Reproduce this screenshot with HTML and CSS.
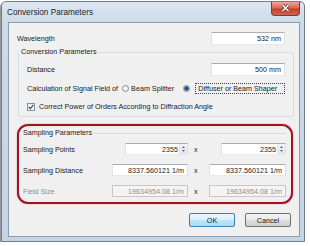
FILE: index.html
```html
<!DOCTYPE html>
<html lang="en">
<head>
  <meta charset="UTF-8">
  <title>Conversion Parameters</title>
  <link rel="stylesheet" href="styles.css">
</head>
<body>
  <div class="window">
    <div class="titlebar">
      <span class="title">Conversion Parameters</span>
      <span class="close">
        <svg width="29" height="14" viewBox="0 0 29 14">
          <path d="M11.5 4 L17.5 10 M17.5 4 L11.5 10" stroke="#6e2418" stroke-width="3" fill="none"/>
          <path d="M11.5 4 L17.5 10 M17.5 4 L11.5 10" stroke="#fff" stroke-width="1.6" fill="none"/>
        </svg>
      </span>
    </div>

    <div class="client">
      <div class="row wave-row">
        <label for="wavelength">Wavelength</label>
        <input class="box" id="wavelength" value="532 nm" readonly>
      </div>

      <fieldset class="group">
        <legend>Conversion Parameters</legend>
        <div class="row">
          <label for="distance">Distance</label>
          <input class="box" id="distance" value="500 mm" readonly>
        </div>
        <div class="row calc-row">
          <span>Calculation of Signal Field of</span>
          <span class="radio"></span>
          <span class="radio-text">Beam Splitter</span>
          <span class="radio checked"></span>
          <span class="focus">Diffuser or Beam Shaper</span>
        </div>
        <div class="row check-row">
          <span class="check">
            <svg width="6" height="6" viewBox="0 0 6 6">
              <path d="M0.8 3 L2.4 4.8 L5.3 0.9" stroke="#24569c" stroke-width="1.3" fill="none"/>
            </svg>
          </span>
          <span>Correct Power of Orders According to Diffraction Angle</span>
        </div>
      </fieldset>

      <div class="highlight">
        <fieldset class="sampling">
          <legend>Sampling Parameters</legend>
          <div class="grid">
            <label>Sampling Points</label>
            <div class="spin spin-a">
              <input value="2355" readonly>
              <span class="arrows">
                <svg width="7" height="10" viewBox="0 0 7 10">
                  <path d="M2 4 L3.5 2.3 L5 4Z M2 6 L3.5 7.7 L5 6Z" fill="#4a5a78"/>
                </svg>
              </span>
            </div>
            <span class="times">x</span>
            <div class="spin spin-b">
              <input value="2355" readonly>
              <span class="arrows">
                <svg width="7" height="10" viewBox="0 0 7 10">
                  <path d="M2 4 L3.5 2.3 L5 4Z M2 6 L3.5 7.7 L5 6Z" fill="#4a5a78"/>
                </svg>
              </span>
            </div>

            <label>Sampling Distance</label>
            <input class="box" value="8337.560121 1/m" readonly>
            <span class="times">x</span>
            <input class="box" value="8337.560121 1/m" readonly>

            <label class="disabled">Field Size</label>
            <input class="box" value="19634954.08 1/m" disabled>
            <span class="times">x</span>
            <input class="box" value="19634954.08 1/m" disabled>
          </div>
        </fieldset>
      </div>

      <div class="buttons">
        <button class="btn default">OK</button>
        <button class="btn">Cancel</button>
      </div>
    </div>
  </div>
</body>
</html>
```

FILE: styles.css
```css
* { box-sizing: border-box; }
body { margin: 0; background: #fff; font-family: "Liberation Sans", Arial, sans-serif; font-size: 7.2px; color: #1a1a1a; }

.window { margin: 1px 0 0 1px; width: 304px; height: 241px; padding: 0 4px 4px 6px; border: 1px solid #707d8d; border-radius: 5px 5px 0 0; background: linear-gradient(#dde6f0, #cbd9e8 22px, #c6d5e5); box-shadow: -1px 1px 1px rgba(0, 0, 0, 0.45); }

.titlebar { display: flex; justify-content: space-between; height: 20px; }
.title { margin-left: -1px; padding-top: 6px; font-size: 8.2px; line-height: 10px; color: #1e1e1e; }
.close { display: block; width: 29px; height: 14px; border: 1px solid #7d3a30; border-top: none; border-radius: 0 0 4px 4px; background: linear-gradient(#e9a99c, #d46a57 45%, #c2412c 55%, #d0634c); }
.close svg { display: block; margin-top: -1px; margin-left: -1px; }

.client { height: 215px; padding: 9px 4px 0 8px; border: 1px solid #8b9cb1; background: #f0f0f0; }

.row { display: flex; align-items: center; }
.wave-row { height: 13px; padding-right: 10px; }
.row .box { margin-left: auto; width: 74px; }

.box { height: 13px; padding: 0 3px; border: 1px solid; border-color: #abadb3 #dbdfe6 #e3e9ef #e2e3ea; background: #fff; font: inherit; color: #1a1a1a; text-align: right; outline: none; }
.box:disabled { background: #f4f4f4; color: #8d8d8d; border-color: #c8c8c8; }

.group { margin: 3px 1px 0 1px; padding: 7px 8px 5px 8px; border: 1px solid #d6dbe0; border-radius: 3px; min-width: 0; }
.group legend { margin-left: -7px; padding: 0 1px; line-height: 8px; }
.group .row:first-of-type { height: 13px; }

.calc-row { height: 11px; margin-top: 7px; }
.radio { width: 7px; height: 7px; margin-left: 4px; border: 1px solid #8c8c8c; border-radius: 50%; background: radial-gradient(circle at 40% 40%, #fff, #dcdcdc); }
.radio.checked { margin-left: 9px; background: radial-gradient(circle, #1f4f98 0 1.8px, #9db3cf 2.4px, #f2f2f2 3px); }
.radio-text { margin-left: 2px; }
.focus { margin-left: 5px; flex: 1; height: 11px; padding-left: 2px; border: 1px dotted #444; line-height: 9px; white-space: nowrap; }

.check-row { height: 9px; margin-top: 8px; }
.check { display: flex; align-items: center; justify-content: center; width: 8px; height: 8px; border: 1px solid #8e8f8f; background: linear-gradient(#eef1f4, #fdfdfd); }
.check + span { margin-left: 4px; }

.highlight { height: 80px; margin: 7px 2px 0 0; padding: 3px 5px 0 4px; border: 2px solid #a4121f; border-radius: 11px; box-shadow: 0 0 1px #a4121f; }
.sampling { margin: 0; padding: 6px 0 0 0; border: none; border-top: 1px solid #d6dbe0; min-width: 0; }
.sampling legend { padding: 0 2px 0 0; line-height: 8px; }

.grid { display: grid; grid-template-columns: 1fr 76px 21px 77px; grid-auto-rows: 12px; row-gap: 9px; align-items: center; }
.grid .box { height: 12px; }
.times { padding-left: 6px; }
.disabled { color: #8d8d8d; }

.spin { display: flex; height: 12px; justify-self: end; border: 1px solid; border-color: #abadb3 #dbdfe6 #e3e9ef #e2e3ea; background: #fff; }
.spin-a { width: 63px; }
.spin-b { width: 65px; }
.spin input { flex: 1; min-width: 0; padding: 0 1px 0 0; border: none; background: none; font: inherit; color: #1a1a1a; text-align: right; outline: none; }
.arrows { display: block; width: 8px; border-left: 1px solid #e2e6ec; background: linear-gradient(#f1f4f8, #dfe6ee); }
.arrows svg { display: block; }

.buttons { display: flex; justify-content: flex-end; gap: 10px; margin-top: 9px; padding-right: 4px; }
.btn { width: 46px; height: 14px; padding: 0; border: 1px solid #707070; border-radius: 2px; background: linear-gradient(#f2f2f2, #ebebeb 50%, #dddddd 50%, #cfcfcf); font: inherit; color: #1a1a1a; }
.btn.default { border-color: #3c7fb1; background: linear-gradient(#eaf6fd, #d9f0fc 50%, #bee6fd 50%, #a7d9f5); }
```
